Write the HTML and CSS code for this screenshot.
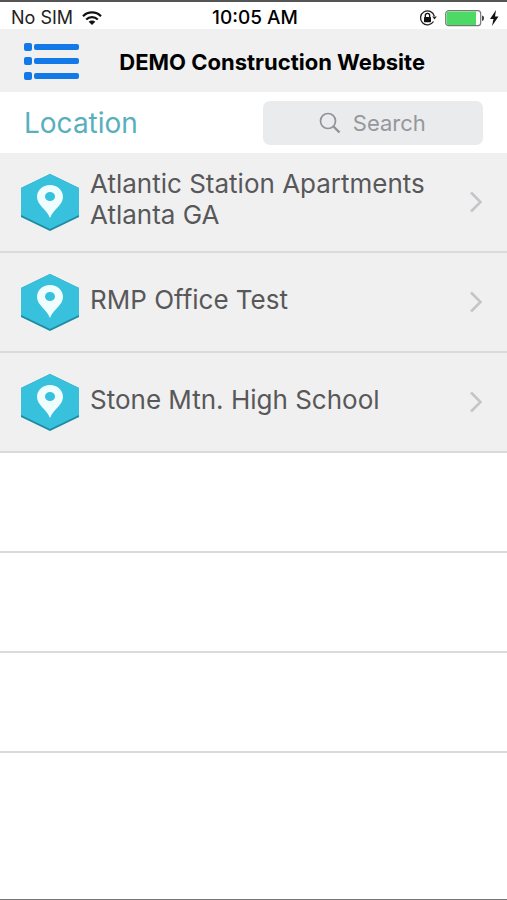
FILE: index.html
```html
<!DOCTYPE html>
<html lang="en">
<head>
<meta charset="utf-8">
<meta name="viewport" content="width=device-width, initial-scale=1">
<title>DEMO Construction Website</title>
<link rel="stylesheet" href="styles.css">
</head>
<body>
<svg class="defs" aria-hidden="true">
  <symbol id="pin" viewBox="0 0 58 57">
    <path fill="#1c8ba3" d="M0 14 29 0l29 14v29L29 57 0 43z"/>
    <path fill="#38c1dc" d="M0 14 29 0l29 14v27L29 55 0 41z"/>
    <path fill="#effdff" fill-rule="evenodd" d="M29 11c-7.500 0-13 5-13 12 0 8 9.500 12 13 21 3.500-9 13-13 13-21 0-7-5.500-12-13-12zm0 7a5 4.500 0 1 1 0 9 5 4.500 0 1 1 0-9z"/>
  </symbol>
  <symbol id="chevron" viewBox="0 0 14 22">
    <path fill="none" stroke="#c5c5c9" stroke-width="2.500" d="m2 1.500 9.500 9.500L2 20.500"/>
  </symbol>
</svg>
<div class="screen">
  <div class="status">
    <div class="status-side">
      <span class="carrier">No SIM</span>
      <svg class="wifi" viewBox="0 0 20 14" aria-label="Wi-Fi">
        <g fill="none" stroke="#111" stroke-width="2.200"><path d="M1 5.200a12.700 12.700 0 0 1 18 0"/><path d="M4.200 8.500a8.200 8.200 0 0 1 11.600 0"/></g>
        <path d="M10 14 6.700 10.800a4.700 4.700 0 0 1 6.600 0z" fill="#111"/>
      </svg>
    </div>
    <time class="clock">10:05 AM</time>
    <div class="status-side status-end">
      <svg class="lock" viewBox="0 0 18 18" aria-label="Rotation lock">
        <path d="M14.500 12.500A7 7 0 1 1 15.300 7" fill="none" stroke="#222" stroke-width="1.300"/>
        <path d="M13.200 7.500h4.600l-2.300 3z" fill="#222"/>
        <rect x="5" y="8" width="7" height="5.200" rx=".6" fill="#111"/>
        <path d="M6.300 8V6.500a2.200 2.200 0 0 1 4.400 0V8" fill="none" stroke="#111" stroke-width="1.300"/>
      </svg>
      <svg class="battery" viewBox="0 0 40 18" aria-label="Battery">
        <rect x=".7" y="1.700" width="35" height="15" rx="3" fill="#fff" stroke="#777" stroke-width="1.200"/>
        <path d="M3.500 2.500H31v13.500H3.500a2 2 0 0 1-2-2v-9.500a2 2 0 0 1 2-2z" fill="#4cd964"/>
        <path d="M37 6.500c1.800.5 2 1.500 2 2.700s-.2 2.200-2 2.700z" fill="#444"/>
      </svg>
      <svg class="bolt" viewBox="0 0 10 16" aria-label="Charging"><path d="M7 0 1 9h3.500L3 16l6.500-9.500H6z" fill="#111"/></svg>
    </div>
  </div>
  <header class="navbar">
    <button class="menu" type="button" aria-label="Menu">
      <svg viewBox="0 0 55 37" fill="#1479e8">
        <rect width="8" height="8" rx="2"/><rect x="10" y="1" width="45" height="6" rx="2"/>
        <rect y="14" width="8" height="8" rx="2"/><rect x="10" y="15" width="45" height="6" rx="2"/>
        <rect y="29" width="8" height="8" rx="2"/><rect x="10" y="30" width="45" height="6" rx="2"/>
      </svg>
    </button>
    <h1 class="title">DEMO Construction Website</h1>
  </header>
  <div class="toolbar">
    <h2 class="heading">Location</h2>
    <label class="search">
      <svg viewBox="0 0 22 22" fill="none" stroke="#929398" aria-hidden="true"><circle cx="9" cy="9" r="7.500" stroke-width="1.700"/><path d="m14.500 14.500 6 6" stroke-width="2.400"/></svg>
      <input type="text" placeholder="Search" aria-label="Search">
    </label>
  </div>
  <ul class="list">
    <li class="row"><a class="item" href="#atlantic"><svg class="pin"><use href="#pin"/></svg><span class="name">Atlantic Station Apartments Atlanta GA</span><svg class="chevron"><use href="#chevron"/></svg></a></li>
    <li class="row"><a class="item" href="#rmp"><svg class="pin"><use href="#pin"/></svg><span class="name">RMP Office Test</span><svg class="chevron"><use href="#chevron"/></svg></a></li>
    <li class="row"><a class="item" href="#stone"><svg class="pin"><use href="#pin"/></svg><span class="name">Stone Mtn. High School</span><svg class="chevron"><use href="#chevron"/></svg></a></li>
    <li class="row"></li>
    <li class="row"></li>
    <li class="row"></li>
  </ul>
</div>
</body>
</html>
```
FILE: styles.css
```css
* { box-sizing: border-box; }
body {
  margin: 0;
  background: #fff;
  color: #000;
  font-family: Inter, "Liberation Sans", sans-serif;
}
.defs { position: absolute; width: 0; height: 0; }
.screen {
  min-height: 100vh;
  border-top: 2px solid #555;
  border-bottom: 1px solid #777;
}
.status {
  display: flex;
  align-items: center;
  height: 27px;
  padding: 4px 8px 0 11px;
  font-size: 18px;
}
.status-side { display: flex; flex: 1; align-items: center; gap: 9px; }
.status-end { justify-content: flex-end; gap: 8px; }
.carrier { color: #222; }
.clock { font-size: 19px; font-weight: 500; }
.wifi { width: 20px; height: 14px; }
.lock { width: 18px; height: 18px; }
.battery { width: 40px; height: 18px; }
.bolt { width: 10px; height: 16px; margin-left: -4px; }
.navbar {
  display: flex;
  align-items: center;
  height: 63px;
  padding: 2px 82px 0 24px;
  background: #f0f0f0;
}
.menu { width: 55px; height: 37px; padding: 0; border: 0; background: none; }
.menu svg { display: block; width: 100%; height: 100%; }
.title { flex: 1; margin: 0; font-size: 22px; font-weight: 700; text-align: right; white-space: nowrap; }
.toolbar {
  display: flex;
  align-items: center;
  justify-content: space-between;
  height: 61px;
  padding: 0 24px;
}
.heading { margin: 0; color: #58afbd; font-size: 28px; font-weight: 400; }
.search {
  display: flex;
  align-items: center;
  justify-content: center;
  gap: 12px;
  width: 48%;
  height: 44px;
  border-radius: 7px;
  background: #e9ebed;
}
.search svg { width: 22px; height: 22px; }
.search input {
  width: 74px;
  padding: 0;
  border: 0;
  outline: 0;
  background: none;
  color: #555;
  font: 22px Inter, "Liberation Sans", sans-serif;
}
.search input::placeholder { color: #96979c; opacity: 1; }
.list { margin: 0; padding: 0; list-style: none; }
.row { height: 100px; border-bottom: 2px solid #dadadb; }
.item {
  display: flex;
  align-items: center;
  height: 100%;
  padding: 0 24px 0 21px;
  background: #f0f0f0;
  color: #58585a;
  text-decoration: none;
}
.pin { flex: none; width: 58px; height: 57px; }
.name { flex: 1; padding: 0 40px 6px 11px; font-size: 26px; line-height: 31px; }
.chevron { flex: none; width: 14px; height: 22px; }
```
